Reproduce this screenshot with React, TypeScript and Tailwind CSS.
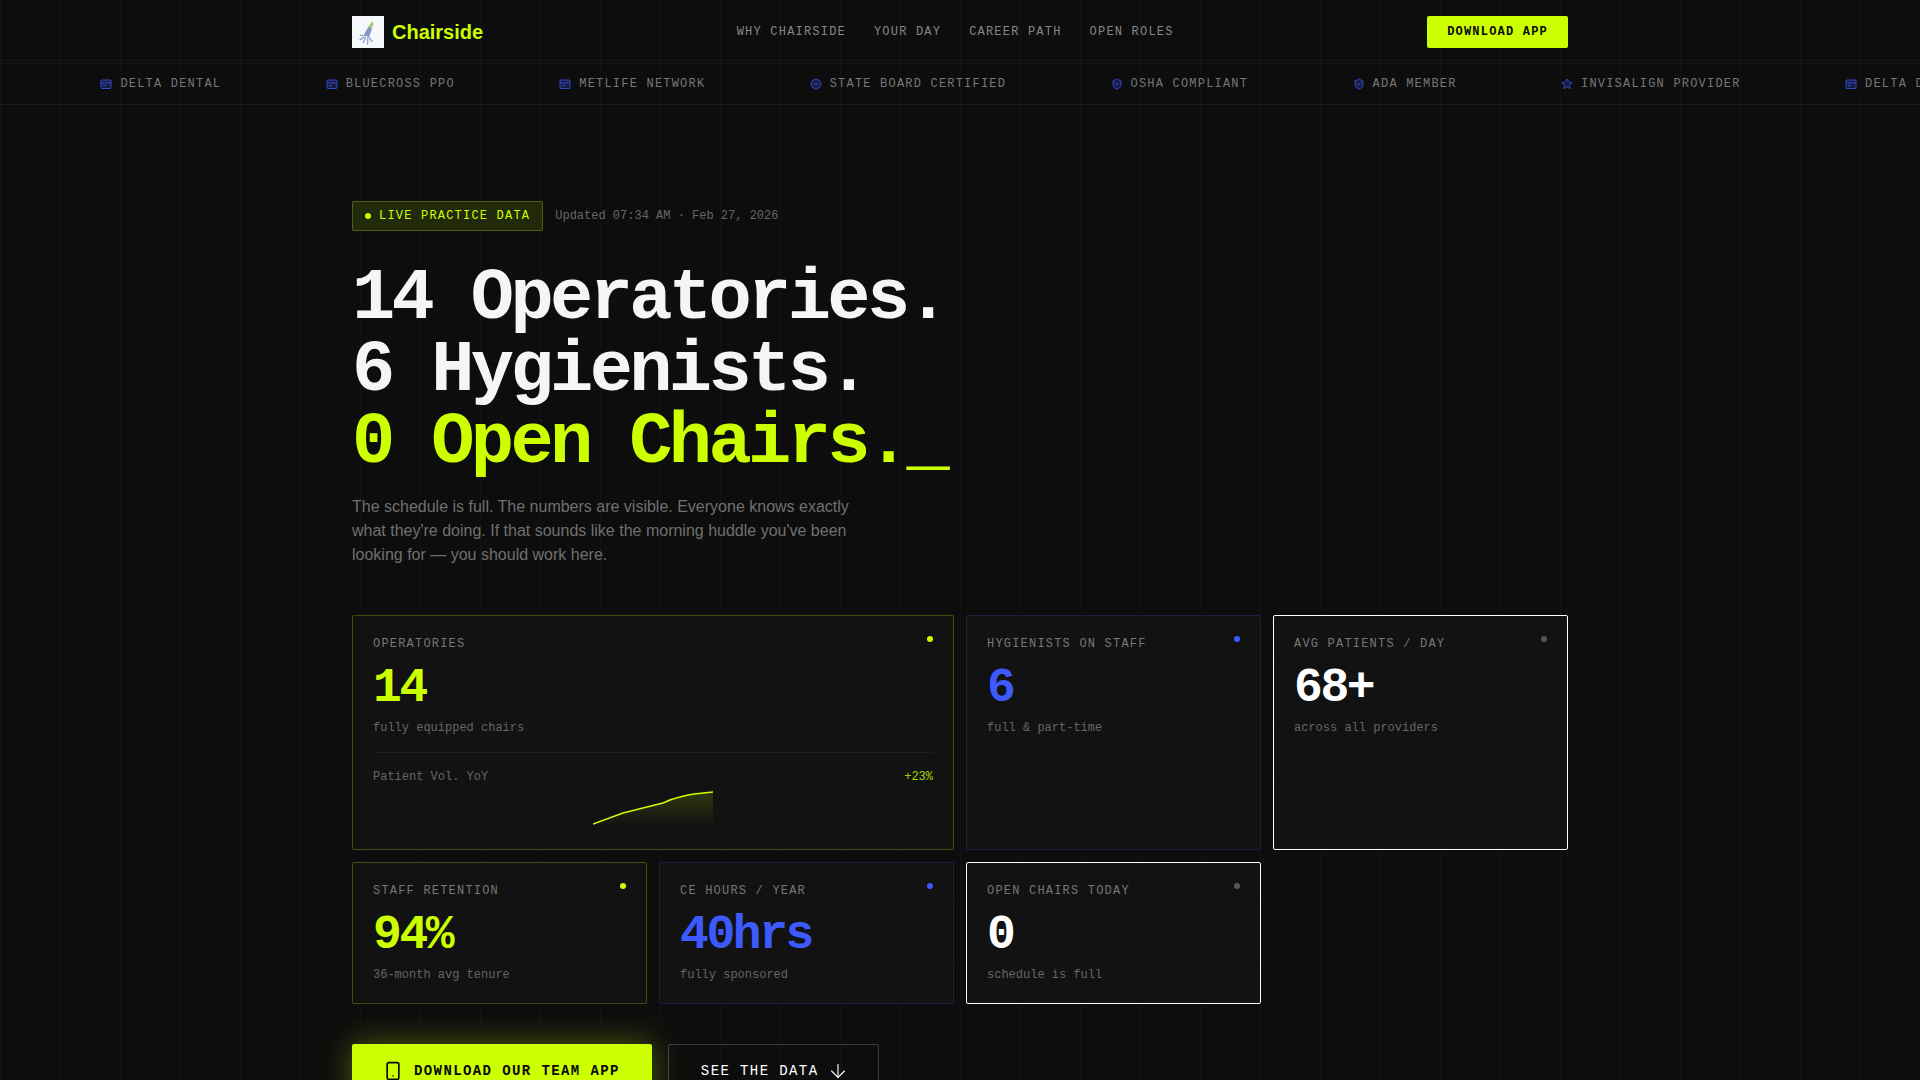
import { ArrowDown, BadgeCheck, ShieldCheck, Smartphone, Star } from "lucide-react";

function CardIcon({ size, className }: { size: number; className?: string; fill?: string; fillOpacity?: number }) {
  return (
    <svg width={size} height={size} viewBox="0 0 24 24" fill="none" stroke="currentColor" strokeWidth="2" className={className}>
      <rect x="2" y="4" width="20" height="17" rx="2" fill="currentColor" fillOpacity="0.25" />
      <path d="M2 10h20M6 15h6" />
    </svg>
  );
}

const tickerItems = [
  { label: "DELTA DENTAL", icon: CardIcon },
  { label: "BLUECROSS PPO", icon: CardIcon },
  { label: "METLIFE NETWORK", icon: CardIcon },
  { label: "STATE BOARD CERTIFIED", icon: BadgeCheck },
  { label: "OSHA COMPLIANT", icon: ShieldCheck },
  { label: "ADA MEMBER", icon: ShieldCheck },
  { label: "INVISALIGN PROVIDER", icon: Star },
  { label: "DELTA DENTAL", icon: CardIcon },
];

const tones = {
  lime: { border: "border-[#ccff00]/25", dot: "bg-[#ccff00]", value: "text-[#ccff00]" },
  blue: { border: "border-[#3d5afe]/20", dot: "bg-[#3d5afe]", value: "text-[#3d5afe]" },
  white: { border: "border-white", dot: "bg-[#555555]", value: "text-white" },
};

type Tone = keyof typeof tones;

function Logo() {
  return (
    <div className="flex h-8 w-8 shrink-0 items-center justify-center bg-[#f6f7fa]">
      <svg width="32" height="32" viewBox="0 0 32 32" fill="none">
        <path d="M20 5l1.500 3-2 5-3-2z" fill="#a5c86e" />
        <path d="M16.500 10.500l3.500 2.500-3 8-5.500-1.500z" fill="#8296cc" />
        <path d="M12 20l-4-1M12.500 21l-5 3M14 21l-3 6M16 21.500l-.5 7M17 21l3.500 5" stroke="#8296cc" strokeWidth="1.200" />
      </svg>
    </div>
  );
}

function StatCard({
  label,
  value,
  sub,
  tone,
  wide,
  children,
}: {
  label: string;
  value: string;
  sub: string;
  tone: Tone;
  wide?: boolean;
  children?: React.ReactNode;
}) {
  const t = tones[tone];
  return (
    <div className={`relative rounded-[2px] border bg-[#121212] p-5 ${t.border} ${wide ? "col-span-2" : ""}`}>
      <span className={`absolute right-5 top-5 h-1.5 w-1.5 rounded-full ${t.dot}`} />
      <div className="mb-[11px] text-xs tracking-[0.1em] text-[#777777]">{label}</div>
      <div className={`text-5xl font-bold leading-[50px] tracking-tighter ${t.value}`}>{value}</div>
      <div className="mt-[7px] text-xs text-[#666666]">{sub}</div>
      {children}
    </div>
  );
}

function Sparkline() {
  return (
    <svg className="mx-auto mt-1 block" width="120" height="40" viewBox="0 0 120 40" fill="none">
      <defs>
        <linearGradient id="spark" x1="0" y1="0" x2="0" y2="1">
          <stop offset="0%" stopColor="#ccff00" stopOpacity="0.16" />
          <stop offset="100%" stopColor="#ccff00" stopOpacity="0" />
        </linearGradient>
      </defs>
      <path d="M0 35L30 24L70 14Q78 10 87 8Q94 6 101 5L120 3V37H0Z" fill="url(#spark)" />
      <path d="M0 35L30 24L70 14Q78 10 87 8Q94 6 101 5L120 3" stroke="#ccff00" strokeWidth="1.5" />
    </svg>
  );
}

export default function App() {
  return (
    <div className="h-screen overflow-hidden bg-[#0d0d0d] bg-[linear-gradient(rgba(255,255,255,0.02)_1px,transparent_1px),linear-gradient(90deg,rgba(255,255,255,0.02)_1px,transparent_1px)] bg-[size:60px_60px] font-['Liberation_Mono',monospace] text-white">
      {/* Nav */}
      <nav className="border-b border-white/[0.03]">
        <div className="mx-auto flex h-[63px] max-w-7xl items-center justify-between px-8">
          <a className="flex items-center gap-2">
            <Logo />
            <span className="font-['Liberation_Sans',sans-serif] text-xl font-bold text-[#ccff00]">Chairside</span>
          </a>
          <div className="flex gap-7 text-xs tracking-[0.1em] text-[#888888]">
            <a>WHY CHAIRSIDE</a>
            <a>YOUR DAY</a>
            <a>CAREER PATH</a>
            <a>OPEN ROLES</a>
          </div>
          <a className="rounded-[2px] bg-[#ccff00] px-5 py-2 text-xs font-bold tracking-[0.1em] text-[#0a0a0a]">
            DOWNLOAD APP
          </a>
        </div>
      </nav>

      {/* Ticker */}
      <div className="flex h-[41px] items-center overflow-hidden border-b border-white/5">
        <div className="flex shrink-0 items-center text-xs tracking-[0.1em] text-[#777777]">
          <span className="ml-[28px] mr-16 text-[#1c1c1c]">·</span>
          {tickerItems.map((item, i) => (
            <div key={i} className="flex shrink-0 items-center">
              <item.icon className="mr-2 text-[#3d5afe] opacity-80" size={12} fill="currentColor" fillOpacity={0.3} />
              <span>{item.label}</span>
              <span className="ml-8 mr-16 text-[#1c1c1c]">·</span>
            </div>
          ))}
        </div>
      </div>

      <main className="mx-auto max-w-7xl px-8 pt-24">
        <div className="mb-8 flex items-center gap-3">
          <div className="flex items-center gap-2 rounded-[2px] border border-[#ccff00]/25 bg-[#ccff00]/[0.12] px-3 py-1.5 text-xs tracking-[0.1em] text-[#ccff00]">
            <span className="h-1.5 w-1.5 rounded-full bg-[#ccff00]" />
            LIVE PRACTICE DATA
          </div>
          <span className="text-xs text-[#666666]">Updated 07:34 AM · Feb 27, 2026</span>
        </div>

        <h1 className="text-7xl font-bold leading-none tracking-tighter text-[#f5f5f5]">
          14 Operatories.
          <br />
          6 Hygienists.
          <br />
          <span className="text-[#ccff00]">0 Open Chairs.</span>
          <span className="text-[#ccff00]">_</span>
        </h1>

        <p className="mt-4 max-w-[520px] font-['Liberation_Sans',sans-serif] text-base leading-6 text-[#707070]">
          The schedule is full. The numbers are visible. Everyone knows exactly what they're doing. If that sounds like
          the morning huddle you've been looking for — you should work here.
        </p>

        <div className="mt-12 grid grid-cols-4 gap-3">
          <StatCard wide label="OPERATORIES" value="14" sub="fully equipped chairs" tone="lime">
            <div className="mt-4 border-t border-white/5 pt-4">
              <div className="flex justify-between text-xs">
                <span className="text-[#666666]">Patient Vol. YoY</span>
                <span className="text-[#ccff00]/80">+23%</span>
              </div>
              <Sparkline />
            </div>
          </StatCard>
          <StatCard label="HYGIENISTS ON STAFF" value="6" sub="full & part-time" tone="blue" />
          <StatCard label="AVG PATIENTS / DAY" value="68+" sub="across all providers" tone="white" />
          <StatCard label="STAFF RETENTION" value="94%" sub="36-month avg tenure" tone="lime" />
          <StatCard label="CE HOURS / YEAR" value="40hrs" sub="fully sponsored" tone="blue" />
          <StatCard label="OPEN CHAIRS TODAY" value="0" sub="schedule is full" tone="white" />
        </div>

        <div className="mt-10 flex items-start gap-4">
          <a className="flex items-center gap-3 rounded-[2px] bg-[#ccff00] px-8 py-[17px] text-sm font-bold tracking-[0.1em] text-[#0a0a0a] shadow-[0_0_32px_rgba(204,255,0,0.35)]">
            <Smartphone className="-mx-px -my-px" size={20} />
            DOWNLOAD OUR TEAM APP
          </a>
          <a className="flex items-center gap-3 rounded-[2px] border border-white/20 px-8 py-4 text-sm tracking-[0.1em] text-white">
            SEE THE DATA
            <ArrowDown className="-mx-[3px] -my-px" size={22} strokeWidth={1.25} />
          </a>
        </div>
      </main>
    </div>
  );
}
